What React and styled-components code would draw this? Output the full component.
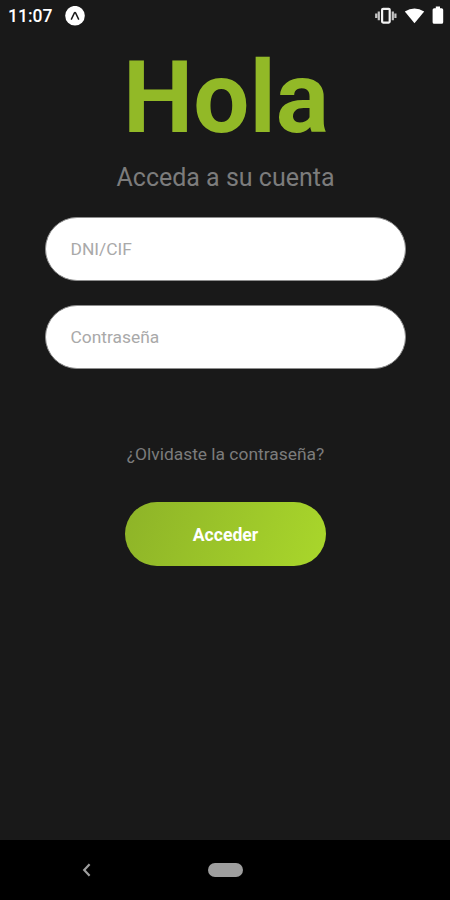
import React from 'react'
import styled, { createGlobalStyle } from 'styled-components'

const App = () => {

    const fields = [
        {id: 1,
        type: "text",
        label: "DNI/CIF"},
        {id: 2,
        type: "password",
        label: "Contraseña"},
    ]
    return (
        <Screen>
        <GlobalStyle/>
        <StatusBar>
            <Clock>11:07</Clock>
            <ExpoIcon/>
            <StatusIcons/>
        </StatusBar>

        <Body>
            <Title>Hola</Title>
            <Subtitle>Acceda a su cuenta</Subtitle>
            <Fields>
                {fields.map(field=>
                    <Input key={field.id} type={field.type} placeholder={field.label} aria-label={field.label}/>
                )}
            </Fields>
            <Forgot>¿Olvidaste la contraseña?</Forgot>
            <Button>Acceder</Button>
        </Body>

        <NavBar>
            <BackIcon/>
            <HomePill/>
        </NavBar>
        </Screen>
    )
}

const ExpoIcon = () => (
    <svg width="20" height="20" viewBox="0 0 20 20">
        <circle cx="10" cy="9.7" r="9.8" fill="#fff"/>
        <path d="M6.2 13.6 L9.3 7.2 Q10 5.8 10.7 7.2 L13.8 13.6" fill="none" stroke="#1a1a1a" strokeWidth="1.5"/>
    </svg>
)

const StatusIcons = () => (
    <Icons width="70" height="20" viewBox="0 0 70 20">
        <path d="M1.2 7.6 V12 M3.8 5.4 V14.2 M20.4 7.6 V12 M17.8 5.4 V14.2" stroke="#c4c4c4" strokeWidth="2.2"/>
        <rect x="7.1" y="2.8" width="7.6" height="13.8" rx="1" fill="none" stroke="#f2f2f2" strokeWidth="2.2"/>
        <path d="M29.8 5.6 Q39.5 -0.8 49.2 5.6 L39.5 17.2 Z" fill="#fff"/>
        <path d="M60.8 2.2 V0.6 H65 V2.2 H66.6 Q68.2 2.2 68.2 3.8 V16.2 Q68.2 17.8 66.6 17.8 H59.2 Q57.6 17.8 57.6 16.2 V3.8 Q57.6 2.2 59.2 2.2 Z" fill="#fff"/>
    </Icons>
)

const BackIcon = () => (
    <Back width="10" height="14" viewBox="0 0 10 14">
        <path d="M7.6 1.2 L2.2 7 L7.6 12.8" fill="none" stroke="#9e9e9e" strokeWidth="2.2"/>
    </Back>
)

const GlobalStyle = createGlobalStyle`
body {
    margin: 0;
    background: #191919;
}
* {
    box-sizing: border-box;
}
`

const Screen = styled.div`
width: 450px;
height: 900px;
display: flex;
flex-direction: column;
overflow: hidden;
background: #191919;
font-family: Roboto, "Liberation Sans", sans-serif;
`

const StatusBar = styled.div`
height: 32px;
display: flex;
align-items: center;
padding: 0 5px 0 8px;
color: #fff;
`

const Clock = styled.span`
width: 57px;
font-size: 17.5px;
font-weight: 500;
line-height: 32px;
`

const Icons = styled.svg`
margin-left: auto;
`

const Body = styled.div`
flex: 1;
display: flex;
flex-direction: column;
align-items: center;
padding: 7px 44px 0 45px;
`

const Title = styled.h1`
margin: 0;
padding-left: 1px;
font-size: 99.5px;
font-weight: 700;
line-height: 118px;
color: #92b927;
`

const Subtitle = styled.p`
margin: 6px 0 0;
font-size: 25px;
line-height: 29px;
color: #7c7c7c;
`

const Fields = styled.div`
width: 100%;
display: flex;
flex-direction: column;
gap: 24px;
margin-top: 25px;
`

const Input = styled.input`
width: 100%;
height: 64px;
padding: 0 24.5px;
border: 1px solid #8e8e8e;
border-radius: 32px;
outline: none;
background: #fff;
font-family: inherit;
font-size: 17.4px;
color: #333;
&::placeholder {
    color: #a9a9a9;
    opacity: 1;
}
`

const Forgot = styled.a`
margin-top: 75px;
font-size: 17.4px;
line-height: 20px;
color: #7c7c7c;
`

const Button = styled.button`
width: 201px;
height: 64px;
margin-top: 38px;
padding: 2px 0 0;
border: 0;
border-radius: 32px;
background: linear-gradient(110deg, #8fb528 5%, #a8d52b 95%);
font-family: inherit;
font-size: 17.6px;
font-weight: 700;
color: #fff;
`

const NavBar = styled.div`
height: 60px;
display: flex;
align-items: center;
background: #000;
`

const Back = styled.svg`
margin-left: 82px;
`

const HomePill = styled.div`
width: 35px;
height: 14px;
margin-left: 116px;
border-radius: 7px;
background: #9e9e9e;
`

export default App
